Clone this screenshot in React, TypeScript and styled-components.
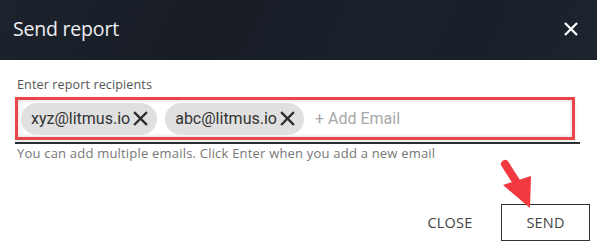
import React from "react";
import styled, { createGlobalStyle } from "styled-components";

const Global = createGlobalStyle`
  html, body { margin: 0; padding: 0; background: #fff; }
  * { box-sizing: border-box; }
`;

const Dialog = styled.div`
  position: relative;
  width: 597px;
  height: 249px;
  background: #fff;
  overflow: hidden;
  font-family: "Open Sans", "Liberation Sans", sans-serif;
`;

const Header = styled.header`
  height: 60px;
  display: flex;
  align-items: center;
  justify-content: space-between;
  padding: 0 19px 0 13px;
  background: linear-gradient(115deg, #1d232d 0%, #171c25 35%, #1b212b 60%, #1a2029 80%, #1d242d 100%);
`;

const Title = styled.h1`
  margin: -3px 0 0 0;
  font-family: "Open Sans", sans-serif;
  font-weight: 400;
  font-size: 19.5px;
  letter-spacing: -0.2px;
  color: #eef0f3;
`;

const IconButton = styled.button`
  border: 0;
  background: transparent;
  padding: 0;
  display: flex;
  color: #fff;
  margin-top: -2px;
`;

const Body = styled.div`
  padding: 17px 17px 0 15px;
`;

const Label = styled.label`
  display: block;
  font-size: 12.6px;
  color: #555;
  padding-left: 2px;
  line-height: 16px;
  letter-spacing: 0.1px;
`;

const FieldLine = styled.div`
  margin-top: 4px;
  border-bottom: 2px solid #2a2e35;
  padding-bottom: 2px;
`;

const ChipBox = styled.div`
  height: 43px;
  margin-right: 5px;
  border: 3px solid #e8464b;
  box-shadow: inset 0 0 4px rgba(0, 0, 0, 0.18), 0 1px 3px rgba(0, 0, 0, 0.12);
  display: flex;
  align-items: center;
  gap: 8px;
  padding: 0 0 0 3px;
`;

const Chip = styled.span`
  height: 32px;
  display: inline-flex;
  align-items: center;
  gap: 3px;
  padding: 0 9px 0 10px;
  border-radius: 16px;
  background: #e0e0e0;
  font-family: Roboto, sans-serif;
  font-size: 16px;
  color: #333;
`;

const ChipRemove = styled.span`
  display: flex;
  color: #2c2c2c;
`;

const AddInput = styled.span`
  margin-left: 3px;
  font-family: Roboto, sans-serif;
  font-size: 16px;
  color: #a8a8a8;
`;

const Helper = styled.p`
  margin: 1px 0 0 2px;
  font-size: 13px;
  color: #777;
  line-height: 16px;
  letter-spacing: 0.2px;
`;

const Footer = styled.div`
  display: flex;
  justify-content: flex-end;
  align-items: center;
  gap: 11px;
  padding: 43px 7px 0 0;
`;

const TextButton = styled.button<{ $outlined?: boolean }>`
  height: 37px;
  width: ${(p) => (p.$outlined ? "89px" : "80px")};
  background: #fff;
  border: ${(p) => (p.$outlined ? "1px solid #333" : "0")};
  font-family: "Open Sans", sans-serif;
  font-size: 14.5px;
  color: #444;
  letter-spacing: 0.2px;
  padding: 0;
`;

const Arrow = styled.svg`
  position: absolute;
  left: 495px;
  top: 158px;
`;

const XIcon = ({ size, stroke }: { size: number; stroke: number }) => (
  <svg width={size} height={size} viewBox="0 0 16 16">
    <path d="M2 2 L14 14 M14 2 L2 14" stroke="currentColor" strokeWidth={stroke} strokeLinecap="square" fill="none" />
  </svg>
);

export default function App() {
  return (
    <Dialog>
      <Global />
      <Header>
        <Title>Send report</Title>
        <IconButton aria-label="close">
          <XIcon size={14} stroke={2.6} />
        </IconButton>
      </Header>
      <Body>
        <Label>Enter report recipients</Label>
        <FieldLine>
          <ChipBox>
            <Chip>
              xyz@litmus.io
              <ChipRemove>
                <XIcon size={15} stroke={2.4} />
              </ChipRemove>
            </Chip>
            <Chip>
              abc@litmus.io
              <ChipRemove>
                <XIcon size={15} stroke={2.4} />
              </ChipRemove>
            </Chip>
            <AddInput>+ Add Email</AddInput>
          </ChipBox>
        </FieldLine>
        <Helper>You can add multiple emails. Click Enter when you add a new email</Helper>
      </Body>
      <Footer>
        <TextButton>CLOSE</TextButton>
        <TextButton $outlined>SEND</TextButton>
      </Footer>
      <Arrow width="45" height="55" viewBox="0 0 45 55">
        <line x1="10" y1="6" x2="24" y2="28" stroke="#f2393f" strokeWidth="8" strokeLinecap="round" />
        <polygon points="8,27 36,18 35,50" fill="#f2393f" />
      </Arrow>
    </Dialog>
  );
}
